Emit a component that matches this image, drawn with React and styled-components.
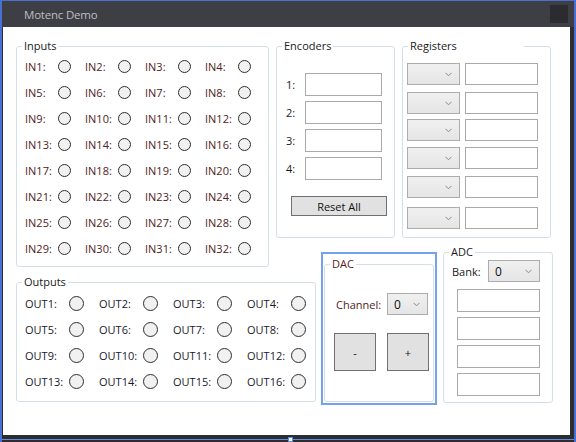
import React from 'react';
import styled, { createGlobalStyle } from 'styled-components';

const GlobalStyle = createGlobalStyle`
  html, body {
    margin: 0;
    padding: 0;
    background: #2d2d30;
  }
  body {
    font-family: "Segoe UI", "Open Sans", sans-serif;
    font-size: 11px;
    color: #1e1e1e;
  }
`;

const Window = styled.div`
  width: 576px;
  height: 442px;
  box-sizing: border-box;
  display: flex;
  flex-direction: column;
  background: #2d2d30;
  border-left: 2px solid #4a6fd3;
  border-right: 2px solid #4a6fd3;
  border-top: 1px solid #4a6fd3;
  overflow: hidden;
`;

const TitleBar = styled.div`
  height: 26px;
  flex: none;
  display: flex;
  align-items: center;
  justify-content: space-between;
  background: #3e3f44;
  padding: 0 6px 0 22px;
`;

const Title = styled.span`
  color: #bdbdc2;
  font-size: 11.5px;
  letter-spacing: -0.2px;
`;

const CloseBox = styled.div`
  width: 18px;
  height: 18px;
  background: #2c2c30;
`;

const Main = styled.div`
  flex: 1;
  display: flex;
  padding-left: 1px;
  padding-right: 4px;
`;

const Client = styled.div`
  flex: 1;
  background: #fff;
  display: grid;
  grid-template-columns: 253px 7px 40px 5px 74px 7px 35px 6px 110px;
  grid-template-rows: 192px 14px 15px 15px 123px;
  padding: 19px 0 0 13px;
  box-sizing: border-box;
`;

const BottomBand = styled.div`
  height: 7px;
  flex: none;
  display: flex;
  justify-content: center;
  align-items: flex-end;
  background: linear-gradient(#2d2d30 4px, #5b8be6 4px, #5b8be6 5px, #2d2d30 5px);
`;

const Grip = styled.div`
  width: 3px;
  height: 3px;
  margin-left: 4px;
  background: #fff;
  border: 1px solid #5b8be6;
`;

const Group = styled.div`
  position: relative;
  box-sizing: border-box;
  border: 1px solid #d5dfe6;
  border-radius: 3px;
  grid-column: ${p => p.$col};
  grid-row: ${p => p.$row};
  align-self: start;
  height: ${p => p.$h}px;
  width: ${p => (p.$w ? `${p.$w}px` : 'auto')};
  padding: ${p => p.$pad};
`;

const Legend = styled.span`
  position: absolute;
  top: -8px;
  left: 5px;
  padding: 0 2px;
  min-width: ${p => p.$min || 0}px;
  box-sizing: border-box;
  background: #fff;
  line-height: 14px;
  color: ${p => p.$color || '#1a1a1a'};
`;

const LampGrid = styled.div`
  display: grid;
  grid-template-columns: repeat(4, ${p => p.$cell}px);
  grid-auto-rows: 26px;
`;

const LampCell = styled.div`
  display: flex;
  align-items: center;
`;

const LampLabel = styled.span`
  width: ${p => p.$w}px;
  flex: none;
  color: ${p => p.$color};
`;

const Lamp = styled.span`
  width: ${p => p.$size}px;
  height: ${p => p.$size}px;
  box-sizing: border-box;
  border-radius: 50%;
  border: 1px solid #2e2e2e;
  background: #f1f1f1;
`;

const FieldRow = styled.div`
  display: flex;
  align-items: center;
  gap: ${p => p.$gap || 0}px;
  margin-top: ${p => p.$top || 0}px;
  margin-left: ${p => p.$left || 0}px;
`;

const RowLabel = styled.span`
  width: ${p => p.$w}px;
  flex: none;
  color: ${p => p.$color || '#1a1a1a'};
`;

const TextBox = styled.div`
  width: ${p => p.$w}px;
  height: ${p => p.$h || 23}px;
  box-sizing: border-box;
  border: 1px solid #a9a9a9;
  background: #fff;
`;

const Combo = styled.div`
  width: ${p => p.$w}px;
  height: 22px;
  box-sizing: border-box;
  border: 1px solid #acacac;
  background: linear-gradient(#f0f0f0, #e5e5e5);
  display: flex;
  align-items: center;
  justify-content: space-between;
  padding: 0 7px 0 6px;
  font-size: 12px;
  color: #111;
`;

const Button = styled.div`
  width: ${p => p.$w}px;
  height: ${p => p.$h}px;
  box-sizing: border-box;
  border: 1px solid #707070;
  background: #e1e1e1;
  display: flex;
  align-items: center;
  justify-content: center;
  margin-top: ${p => p.$top || 0}px;
  margin-left: ${p => p.$left || 0}px;
  color: #111;
`;

const Column = styled.div`
  display: flex;
  flex-direction: column;
  gap: ${p => p.$gap || 0}px;
  margin-top: ${p => p.$top || 0}px;
  margin-left: ${p => p.$left || 0}px;
`;

const DacFrame = styled.div`
  grid-column: 5 / 8;
  grid-row: 3 / 6;
  box-sizing: border-box;
  border: 2px solid #74a2ee;
  padding: 10px 1px 1px 1px;
  display: flex;
`;

const Chevron = () => (
  <svg width="7" height="5" viewBox="0 0 7 5">
    <polyline points="0.5,0.8 3.5,3.8 6.5,0.8" fill="none" stroke="#8a8a8a" strokeWidth="1" />
  </svg>
);

const DropDown = ({ w, value }) => (
  <Combo $w={w}>
    <span>{value}</span>
    <Chevron />
  </Combo>
);

const range = n => Array.from({ length: n }, (_, i) => i + 1);

const registerTops = [16, 7, 5, 6, 7, 9];

export default function App() {
  return (
    <>
      <GlobalStyle />
      <Window>
        <TitleBar>
          <Title>Motenc Demo</Title>
          <CloseBox />
        </TitleBar>
        <Main>
          <Client>
            <Group $col="1 / 2" $row="1 / 4" $h={221} $pad="6px 0 0 8px">
              <Legend>Inputs</Legend>
              <LampGrid $cell={60}>
                {range(32).map(i => (
                  <LampCell key={i}>
                    <LampLabel $w={33} $color="#4e2222">IN{i}:</LampLabel>
                    <Lamp $size={13} />
                  </LampCell>
                ))}
              </LampGrid>
            </Group>

            <Group $col="3 / 6" $row="1 / 2" $h={192} $pad="26px 0 0 9px">
              <Legend>Encoders</Legend>
              <Column $gap={5}>
                {range(4).map(i => (
                  <FieldRow key={i}>
                    <RowLabel $w={19}>{i}:</RowLabel>
                    <TextBox $w={77} />
                  </FieldRow>
                ))}
              </Column>
              <Button $w={96} $h={20} $top={16} $left={5}>Reset All</Button>
            </Group>

            <Group $col="7 / 10" $row="1 / 2" $h={192} $w={149} $pad="0 0 0 4px">
              <Legend $min={116}>Registers</Legend>
              {registerTops.map((t, i) => (
                <FieldRow key={i} $top={t} $gap={5}>
                  <DropDown w={53} />
                  <TextBox $w={73} $h={22} />
                </FieldRow>
              ))}
            </Group>

            <Group $col="1 / 4" $row="5 / 6" $h={120} $w={300} $pad="7px 0 0 8px">
              <Legend>Outputs</Legend>
              <LampGrid $cell={74}>
                {range(16).map(i => (
                  <LampCell key={i}>
                    <LampLabel $w={44} $color="#1a1a2a">OUT{i}:</LampLabel>
                    <Lamp $size={15} />
                  </LampCell>
                ))}
              </LampGrid>
            </Group>

            <DacFrame>
              <Group $h={138} $w={110} $pad="0 0 0 9px">
                <Legend $color="#5a1a1a">DAC</Legend>
                <FieldRow $top={28} $left={2}>
                  <RowLabel $w={51} $color="#4e2222">Channel:</RowLabel>
                  <DropDown w={41} value="0" />
                </FieldRow>
                <FieldRow $top={18} $gap={11}>
                  <Button $w={42} $h={38}>-</Button>
                  <Button $w={42} $h={38}>+</Button>
                </FieldRow>
              </Group>
            </DacFrame>

            <Group $col="9 / 10" $row="3 / 6" $h={151} $pad="7px 0 0 8px">
              <Legend>ADC</Legend>
              <FieldRow>
                <RowLabel $w={36}>Bank:</RowLabel>
                <DropDown w={52} value="0" />
              </FieldRow>
              <Column $gap={5} $top={7} $left={5}>
                {range(4).map(i => (
                  <TextBox key={i} $w={83} />
                ))}
              </Column>
            </Group>
          </Client>
        </Main>
        <BottomBand>
          <Grip />
        </BottomBand>
      </Window>
    </>
  );
}
